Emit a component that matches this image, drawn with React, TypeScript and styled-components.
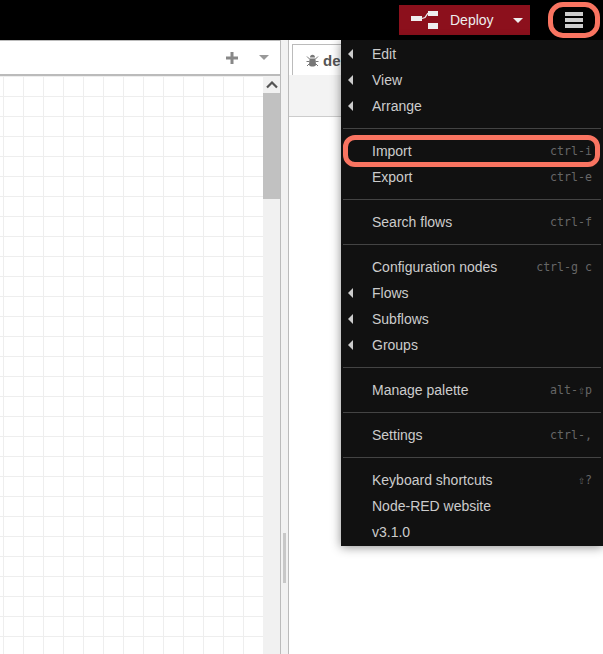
import { createGlobalStyle } from "styled-components";
import styled from "styled-components";

const MENU = [
  [
    { label: "Edit", sub: true },
    { label: "View", sub: true },
    { label: "Arrange", sub: true },
  ],
  [
    { label: "Import", key: "ctrl-i" },
    { label: "Export", key: "ctrl-e" },
  ],
  [{ label: "Search flows", key: "ctrl-f" }],
  [
    { label: "Configuration nodes", key: "ctrl-g c" },
    { label: "Flows", sub: true },
    { label: "Subflows", sub: true },
    { label: "Groups", sub: true },
  ],
  [{ label: "Manage palette", key: "alt-⇧p" }],
  [{ label: "Settings", key: "ctrl-," }],
  [{ label: "Keyboard shortcuts", key: "⇧?" }, { label: "Node-RED website" }, { label: "v3.1.0" }],
];

function App() {
  return (
    <Page>
      <GlobalStyle />
      <Header>
        <DeployButton>
          <DeployIcon width="27" height="18" viewBox="0 0 27 18">
            <rect x="0" y="5" width="11" height="5" fill="#eee" />
            <path d="M11 7.500 L14 6.500 L17 2" stroke="#eee" strokeWidth="1.300" fill="none" />
            <rect x="17" y="0" width="10" height="5" fill="#eee" />
            <rect x="17" y="12" width="10" height="6" fill="#eee" />
          </DeployIcon>
          <DeployLabel>Deploy</DeployLabel>
          <DeployCaret />
        </DeployButton>
        <MenuButton>
          <MenuBar />
          <MenuBar />
          <MenuBar />
        </MenuButton>
      </Header>

      <Main>
        <Workspace>
          <TabBar>
            <TabAction width="12" height="12" viewBox="0 0 12 12">
              <path d="M4.500 0h3v4.500H12v3H7.500V12h-3V7.500H0v-3h4.500z" fill="#888" />
            </TabAction>
            <TabCaret />
          </TabBar>
          <CanvasRow>
            <Canvas />
            <ScrollTrack>
              <ScrollUp>
                <svg width="12" height="8" viewBox="0 0 12 8">
                  <path d="M1 6.500 6 1.500l5 5" stroke="#555" strokeWidth="2.200" fill="none" />
                </svg>
              </ScrollUp>
              <ScrollThumb />
            </ScrollTrack>
          </CanvasRow>
        </Workspace>

        <Separator>
          <SeparatorHandle />
        </Separator>

        <Sidebar>
          <SidebarTabs>
            <SidebarTab>
              <svg width="13" height="13" viewBox="0 0 13 13">
                <path
                  d="M4 3.500C4 1.800 5 .8 6.500 .8S9 1.800 9 3.500zM3.500 4.500h6L10 11c-.6 1-2 1.600-3.500 1.600S3.600 12 3 11z"
                  fill="#777"
                />
                <path
                  d="M1 2.500l2.500 2.500M12 2.500 9.500 5M.5 7.500h3M12.500 7.500h-3M1 12l2.500-2.500M12 12 9.500 9.500"
                  stroke="#777"
                  strokeWidth="1"
                />
              </svg>
              <SidebarTabLabel>debug</SidebarTabLabel>
            </SidebarTab>
          </SidebarTabs>
          <SidebarToolbar />
          <SidebarBody />
        </Sidebar>
      </Main>

      <MenuPanel>
        {MENU.map((group, groupIdx) => (
          <MenuGroup key={groupIdx}>
            {group.map((item) => (
              <MenuItem key={item.label}>
                {item.sub && <SubArrow />}
                <MenuLabel>{item.label}</MenuLabel>
                {item.key && <Shortcut>{item.key}</Shortcut>}
              </MenuItem>
            ))}
          </MenuGroup>
        ))}
      </MenuPanel>

      <HamburgerRing />
      <ImportRing />
    </Page>
  );
}

export default App;

const GlobalStyle = createGlobalStyle`
  html, body {
    margin: 0;
    padding: 0;
    height: 100%;
    overflow: hidden;
    background: #fff;
  }
  * {
    box-sizing: border-box;
  }
`;

const Page = styled.div`
  position: relative;
  width: 603px;
  height: 654px;
  display: flex;
  flex-direction: column;
  overflow: hidden;
  font-family: "Liberation Sans", Arial, sans-serif;
`;

const Header = styled.div`
  height: 40px;
  flex-shrink: 0;
  background: #000;
  display: flex;
  justify-content: flex-end;
  align-items: center;
  padding-right: 13px;
`;

const DeployButton = styled.div`
  width: 131px;
  height: 30px;
  margin-right: 28px;
  padding: 0 7px 0 12px;
  background: #8c101c;
  display: flex;
  align-items: center;
`;

const DeployIcon = styled.svg`
  flex-shrink: 0;
`;

const DeployLabel = styled.span`
  margin-left: 12px;
  color: #eee;
  font-size: 14px;
`;

const DeployCaret = styled.span`
  margin-left: auto;
  width: 0;
  height: 0;
  border-left: 5px solid transparent;
  border-right: 5px solid transparent;
  border-top: 5px solid #eee;
`;

const MenuButton = styled.div`
  width: 32px;
  height: 30px;
  display: flex;
  flex-direction: column;
  align-items: center;
  justify-content: center;
  gap: 2px;
`;

const MenuBar = styled.span`
  width: 18px;
  height: 4px;
  background: #ccc;
`;

const Main = styled.div`
  flex: 1;
  min-height: 0;
  display: flex;
`;

const Workspace = styled.div`
  width: 281px;
  flex-shrink: 0;
  display: flex;
  flex-direction: column;
  border-right: 1px solid #bbb;
`;

const TabBar = styled.div`
  height: 36px;
  flex-shrink: 0;
  border-top: 1px solid #bbb;
  border-bottom: 2px solid #bbb;
  display: flex;
  justify-content: flex-end;
  align-items: center;
  padding-right: 11px;
  gap: 21px;
  background: #fff;
`;

const TabAction = styled.svg`
  flex-shrink: 0;
`;

const TabCaret = styled.span`
  width: 0;
  height: 0;
  border-left: 5px solid transparent;
  border-right: 5px solid transparent;
  border-top: 5px solid #999;
`;

const CanvasRow = styled.div`
  flex: 1;
  min-height: 0;
  display: flex;
`;

const Canvas = styled.div`
  flex: 1;
  background-color: #fff;
  background-image: linear-gradient(to right, #eee 1px, transparent 1px),
    linear-gradient(to bottom, #eee 1px, transparent 1px);
  background-size: 20px 20px;
  background-position: 3px 0;
`;

const ScrollTrack = styled.div`
  width: 17px;
  flex-shrink: 0;
  background: #f1f1f1;
  display: flex;
  flex-direction: column;
`;

const ScrollUp = styled.div`
  height: 17px;
  display: flex;
  align-items: center;
  justify-content: center;
`;

const ScrollThumb = styled.div`
  height: 106px;
  background: #c1c1c1;
`;

const Separator = styled.div`
  width: 7px;
  flex-shrink: 0;
  background: #f2f2f2;
  display: flex;
  justify-content: center;
  align-items: flex-end;
  padding-bottom: 71px;
`;

const SeparatorHandle = styled.div`
  width: 3px;
  height: 50px;
  background: #c8c8c8;
`;

const Sidebar = styled.div`
  flex: 1;
  min-width: 0;
  display: flex;
  flex-direction: column;
  border-left: 1px solid #bbb;
  background: #fff;
`;

const SidebarTabs = styled.div`
  height: 35px;
  flex-shrink: 0;
  padding: 4px 0 0 3px;
  background: #fff;
`;

const SidebarTab = styled.div`
  height: 31px;
  width: 80px;
  padding-left: 13px;
  border: 1px solid #bbb;
  border-bottom: none;
  background: #fff;
  display: flex;
  align-items: center;
  gap: 4px;
`;

const SidebarTabLabel = styled.span`
  font-size: 15px;
  font-weight: 700;
  color: #555;
`;

const SidebarToolbar = styled.div`
  height: 42px;
  flex-shrink: 0;
  background: #f3f3f3;
  border-bottom: 1px solid #ccc;
`;

const SidebarBody = styled.div`
  flex: 1;
  background: #fff;
`;

const MenuPanel = styled.div`
  position: absolute;
  top: 40px;
  left: 341px;
  width: 262px;
  padding: 1px 0;
  background: #111;
  box-shadow: 0 1px 10px rgba(0, 0, 0, 0.45);
`;

const MenuGroup = styled.div`
  & + & {
    margin: 9px 2px 0;
    padding-top: 9px;
    border-top: 1px solid #444;
  }
  & + & > div {
    margin: 0 -2px;
  }
`;

const MenuItem = styled.div`
  position: relative;
  height: 26px;
  display: flex;
  align-items: center;
  justify-content: space-between;
  padding: 0 11px 0 31px;
`;

const SubArrow = styled.span`
  position: absolute;
  left: 7px;
  top: 8px;
  width: 0;
  height: 0;
  border-top: 5px solid transparent;
  border-bottom: 5px solid transparent;
  border-right: 5px solid #ccc;
`;

const MenuLabel = styled.span`
  color: #ccc;
  font-size: 14px;
`;

const Shortcut = styled.span`
  font-family: "DejaVu Sans Mono", monospace;
  font-size: 11.600px;
  color: #666;
`;

const HamburgerRing = styled.div`
  position: absolute;
  top: 2px;
  left: 548px;
  width: 52px;
  height: 36px;
  border: 5px solid #f97461;
  border-radius: 15px;
`;

const ImportRing = styled.div`
  position: absolute;
  top: 135px;
  left: 343px;
  width: 257px;
  height: 32px;
  border: 5px solid #f97461;
  border-radius: 12px;
`;
